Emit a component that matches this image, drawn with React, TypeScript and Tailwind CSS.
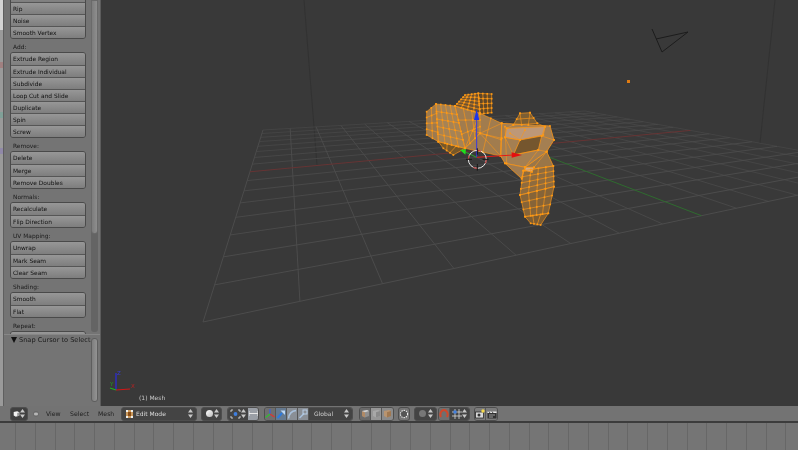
import React from "react";

type Pt = [number, number];

const font = { fontFamily: '"DejaVu Sans", sans-serif' };

// --- perspective floor grid ---
const quad: Pt[] = [[203, 322], [911, 171], [585, 111], [263, 130]];

function homography(u: number, v: number): Pt {
  const [p0, p1, p2, p3] = quad;
  const dx1 = p1[0] - p2[0], dx2 = p3[0] - p2[0], sx = p0[0] - p1[0] + p2[0] - p3[0];
  const dy1 = p1[1] - p2[1], dy2 = p3[1] - p2[1], sy = p0[1] - p1[1] + p2[1] - p3[1];
  const den = dx1 * dy2 - dx2 * dy1;
  const g = (sx * dy2 - dx2 * sy) / den;
  const h = (dx1 * sy - sx * dy1) / den;
  const a = p1[0] - p0[0] + g * p1[0], b = p3[0] - p0[0] + h * p3[0];
  const d = p1[1] - p0[1] + g * p1[1], e = p3[1] - p0[1] + h * p3[1];
  const w = g * u + h * v + 1;
  return [(a * u + b * v + p0[0]) / w, (d * u + e * v + p0[1]) / w];
}

function FloorGrid() {
  const ticks = Array.from({ length: 17 }, (_, i) => i / 16);
  return (
    <g strokeWidth={1} stroke="#4c4c4c">
      {ticks.map((t) => {
        const a = homography(t, 0), b = homography(t, 1), c = homography(0, t), d = homography(1, t);
        return (
          <g key={t}>
            {t !== 0.5 && <line x1={a[0]} y1={a[1]} x2={b[0]} y2={b[1]} strokeOpacity={1 - 0.45 * t} />}
            {t !== 0.5 && <line x1={c[0]} y1={c[1]} x2={d[0]} y2={d[1]} strokeOpacity={1 - 0.45 * t} />}
          </g>
        );
      })}
      <line x1={homography(0, 0.5)[0]} y1={homography(0, 0.5)[1]} x2={homography(1, 0.5)[0]} y2={homography(1, 0.5)[1]} stroke="#663434" />
      <line x1={homography(0.5, 0)[0]} y1={homography(0.5, 0)[1]} x2={homography(0.5, 1)[0]} y2={homography(0.5, 1)[1]} stroke="#2f6b2f" />
    </g>
  );
}

// --- mesh, coordinates are in a 3x space around (410,80) ---
type Patch = { c: Pt[]; nu: number; nv: number; fill: string };

const patches: Patch[] = [
  { c: [[50, 95], [78, 72], [85, 185], [50, 165]], nu: 2, nv: 4, fill: "#9c7a50" },
  { c: [[78, 72], [135, 78], [165, 205], [85, 185]], nu: 4, nv: 5, fill: "#a68355" },
  { c: [[135, 78], [210, 100], [210, 160], [165, 205]], nu: 3, nv: 3, fill: "#a17c4e" },
  { c: [[85, 185], [165, 205], [130, 225], [100, 205]], nu: 3, nv: 1, fill: "#765729" },
  { c: [[135, 78], [165, 45], [205, 40], [210, 100]], nu: 5, nv: 4, fill: "#6f5230" },
  { c: [[205, 40], [245, 42], [245, 98], [210, 102]], nu: 3, nv: 4, fill: "#5f4728" },
  { c: [[210, 100], [275, 130], [272, 228], [165, 205]], nu: 2, nv: 2, fill: "#a17c4e" },
  { c: [[310, 135], [330, 100], [360, 98], [382, 130]], nu: 2, nv: 1, fill: "#7d5f34" },
  { c: [[340, 272], [430, 258], [432, 320], [330, 345]], nu: 4, nv: 4, fill: "#8e6b3e" },
  { c: [[330, 345], [432, 320], [415, 400], [345, 410]], nu: 4, nv: 3, fill: "#866438" },
  { c: [[345, 410], [415, 400], [392, 435], [362, 430]], nu: 3, nv: 1, fill: "#7c5c32" },
];

const faces: { p: Pt[]; fill: string }[] = [
  { p: [[345, 262], [410, 215], [430, 258], [340, 272]], fill: "#9a7648" },
  { p: [[275, 130], [420, 138], [432, 180], [410, 215], [345, 262], [285, 250], [272, 228]], fill: "#a47f52" },
  { p: [[290, 145], [405, 140], [400, 165], [330, 180], [285, 172]], fill: "#bd9878" },
  { p: [[330, 180], [395, 168], [385, 210], [310, 225]], fill: "#75562e" },
  { p: [[285, 250], [345, 262], [335, 296]], fill: "#a07b50" },
  { p: [[345, 262], [372, 262], [366, 276], [345, 272]], fill: "#d0ab8c" },
];

const wires: Pt[][] = [
  [[210, 160], [275, 130]],
  [[165, 205], [210, 160], [272, 228]],
  [[210, 160], [275, 175], [272, 228]],
  [[275, 130], [275, 175]],
  [[285, 140], [290, 250]],
  [[285, 172], [310, 225], [272, 228]],
  [[330, 180], [285, 172]],
  [[405, 140], [395, 168], [432, 180]],
  [[385, 210], [410, 215]],
  [[310, 225], [385, 210], [345, 262]],
  [[310, 135], [290, 145]],
  [[382, 130], [405, 140]],
  [[330, 100], [335, 135]],
  [[360, 98], [355, 135]],
  [[335, 296], [340, 272]],
  [[300, 160], [330, 180], [345, 150]],
  [[372, 262], [410, 215]],
];

function lerp(a: Pt, b: Pt, t: number): Pt {
  return [a[0] + (b[0] - a[0]) * t, a[1] + (b[1] - a[1]) * t];
}

function Mesh() {
  const wire = "#f8961a";
  const lines: string[] = [];
  const verts: Pt[] = [];
  patches.forEach(({ c, nu, nv }) => {
    for (let i = 0; i <= nu; i++) {
      const p = lerp(c[0], c[1], i / nu), q = lerp(c[3], c[2], i / nu);
      lines.push(`M${p[0]} ${p[1]}L${q[0]} ${q[1]}`);
      for (let j = 0; j <= nv; j++) verts.push(lerp(p, q, j / nv));
    }
    for (let j = 0; j <= nv; j++) {
      const p = lerp(c[0], c[3], j / nv), q = lerp(c[1], c[2], j / nv);
      lines.push(`M${p[0]} ${p[1]}L${q[0]} ${q[1]}`);
    }
  });
  faces.forEach((f) => f.p.forEach((v) => verts.push(v)));
  wires.forEach((w) => w.forEach((v) => verts.push(v)));
  return (
    <g transform="translate(410 80) scale(0.3333)">
      {patches.map((p, i) => (
        <polygon key={i} points={p.c.map((v) => v.join(",")).join(" ")} fill={p.fill} />
      ))}
      {faces.map((f, i) => (
        <polygon key={i} points={f.p.map((v) => v.join(",")).join(" ")} fill={f.fill} stroke={wire} strokeWidth={2.4} strokeLinejoin="round" />
      ))}
      <path d={lines.join("")} fill="none" stroke={wire} strokeWidth={2} />
      {wires.map((w, i) => (
        <polyline key={i} points={w.map((v) => v.join(",")).join(" ")} fill="none" stroke={wire} strokeWidth={1.8} />
      ))}
      {verts.map((v, i) => (
        <rect key={i} x={v[0] - 2.5} y={v[1] - 2.5} width={5} height={5} fill="#ff9a14" />
      ))}

      {/* manipulator */}
      <line x1={200} y1={232} x2={200} y2={110} stroke="#3a3ae0" strokeWidth={3} />
      <polygon points="200,88 192,120 208,120" fill="#1f35e8" />
      <line x1={200} y1={232} x2={310} y2={225} stroke="#e01818" strokeWidth={3} />
      <polygon points="336,225 305,217 305,233" fill="#e40f0f" />
      <line x1={200} y1={232} x2={165} y2={216} stroke="#28a028" strokeWidth={3} />
      <polygon points="150,210 168,208 166,224" fill="#1ee01e" />

      {/* 3d cursor */}
      <circle cx={202} cy={238} r={27} fill="none" stroke="#e8e8e8" strokeWidth={3} />
      <circle cx={202} cy={238} r={27} fill="none" stroke="#c02020" strokeWidth={3} strokeDasharray="12 30" />
      <path d="M202 205V224M202 252V272M168 238H186M218 238H236" stroke="#161616" strokeWidth={3} />
    </g>
  );
}

function Viewport() {
  return (
    <div className="relative flex-1 h-full bg-[#393939] overflow-hidden">
      <svg className="absolute inset-0" width={697} height={406} viewBox="101 0 697 406">
        <path d="M304 0L317 165M775 0L760 143" stroke="#323232" fill="none" />
        <FloorGrid />
        <path d="M652 29L662 52L688 32L656 39" fill="none" stroke="#1c1c1c" strokeWidth={1} />
        <rect x={627} y={80} width={3} height={3} fill="#e07c12" />
        <Mesh />
        <path d="M116 390V373" stroke="#2a2ae0" strokeWidth={1.2} />
        <path d="M116 390L130 389" stroke="#d01818" strokeWidth={1.2} />
        <path d="M116 390L110 388" stroke="#20b020" strokeWidth={1.2} />
        <text x={117} y={375} fontSize={5.5} fill="#3a3ad0" style={font}>Z</text>
        <text x={131} y={388} fontSize={5.5} fill="#c02020" style={font}>X</text>
        <text x={110} y={386} fontSize={5.5} fill="#20a020" style={font}>Y</text>
      </svg>
      <div className="absolute left-[38px] bottom-[3px] text-[6px] leading-[10px] text-[#c8c8c8]">(1) Mesh</div>
    </div>
  );
}

// --- tool shelf ---
const groups: { label?: string; items: string[] }[] = [
  { items: ["", "Rip", "Noise", "Smooth Vertex"] },
  { label: "Add:", items: ["Extrude Region", "Extrude Individual", "Subdivide", "Loop Cut and Slide", "Duplicate", "Spin", "Screw"] },
  { label: "Remove:", items: ["Delete", "Merge", "Remove Doubles"] },
  { label: "Normals:", items: ["Recalculate", "Flip Direction"] },
  { label: "UV Mapping:", items: ["Unwrap", "Mark Seam", "Clear Seam"] },
  { label: "Shading:", items: ["Smooth", "Flat"] },
  { label: "Repeat:", items: [""] },
];

function ToolGroup({ label, items }: { label?: string; items: string[] }) {
  return (
    <div className="flex flex-col shrink-0">
      {label && <div className="h-[13px] pl-[3px] pt-[4px] text-[5.9px] leading-[8px] text-[#1c1c1c]">{label}</div>}
      <div className="flex flex-col shrink-0 rounded-[3px] border border-[#4a4a4a] overflow-hidden">
        {items.map((name, i) => (
          <div
            key={i}
            className={`h-[12px] shrink-0 pl-[2px] text-[5.9px] leading-[12px] text-[#111] bg-gradient-to-b from-[#979797] to-[#7e7e7e] ${i > 0 ? "border-t border-[#565656]" : ""}`}
          >
            {name}
          </div>
        ))}
      </div>
    </div>
  );
}

function Sidebar() {
  return (
    <div className="w-[97px] h-full flex flex-col bg-[#747474] border-r border-[#5c5c5c]">
      <div className="h-[335px] flex shrink-0 overflow-hidden border-b border-[#878787]">
        <div className="w-[76px] ml-[6px] -mt-[11px] flex flex-col shrink-0">
          {groups.map((g, i) => (
            <ToolGroup key={i} label={g.label} items={g.items} />
          ))}
        </div>
        <div className="ml-[5px] w-[7px] h-[332px] rounded-b-[3px] bg-[#646464] overflow-hidden">
          <div className="h-[234px] rounded-b-[3px] border border-[#6a6a6a] bg-gradient-to-r from-[#7c7c7c] to-[#8e8e8e]" />
        </div>
      </div>
      <div className="flex flex-1 min-h-0">
        <div className="w-[87px] flex shrink-0 items-start pl-[7px] gap-[2px]">
          <span className="mt-[2px] w-0 h-0 shrink-0 border-x-[3px] border-x-transparent border-t-[6px] border-t-[#111]" />
          <span className="text-[6.6px] leading-[10px] whitespace-nowrap text-[#1c1c1c]">Snap Cursor to Select</span>
        </div>
        <div className="w-[7px] h-[64px] mt-[3px] rounded-[3px] border border-[#5e5e5e] bg-gradient-to-r from-[#7e7e7e] to-[#939393]" />
      </div>
    </div>
  );
}

// --- header bits ---
function Arrows() {
  const c = "#c8c8c8";
  return (
    <svg width={5} height={9} viewBox="0 0 5 9" className="shrink-0">
      <path d="M2.5 0L5 3.4H0Z" fill={c} />
      <path d="M2.5 9L5 5.6H0Z" fill={c} />
    </svg>
  );
}

function Cube() {
  return (
    <svg width={10} height={10} viewBox="0 0 10 10">
      <path d="M1 2L6 1L9 2.5V7L4 9L1 7Z" fill="#f2f2f2" />
      <path d="M6 3.5L9 2.5V7L6 8.4Z" fill="#9a9a9a" />
    </svg>
  );
}

function IconBtn({ bg, children }: { bg: string; children: React.ReactNode }) {
  return <div className={`w-[11px] h-[13px] flex items-center justify-center border-r border-[#565656] last:border-r-0 ${bg}`}>{children}</div>;
}

function Group({ children, className = "" }: { children: React.ReactNode; className?: string }) {
  return <div className={`flex h-[14px] shrink-0 items-center rounded-[3px] border border-[#4e4e4e] overflow-hidden ${className}`}>{children}</div>;
}

function Header() {
  return (
    <div className="h-[17px] flex items-center bg-[#737373] border-b-[2px] border-b-[#3c3c3c] pl-[10px] shrink-0">
      <Group className="w-[18px] bg-[#404040] justify-between px-[2px]"><Cube /><Arrows /></Group>
      <svg width={6} height={6} viewBox="0 0 6 6" className="ml-[5px] shrink-0">
        <circle cx={3} cy={3} r={2.6} fill="#8b8b8b" stroke="#5c5c5c" strokeWidth={0.6} />
        <path d="M1.2 3H4.8" stroke="#e0e0e0" />
      </svg>
      <span className="ml-[7px] w-[24px] shrink-0 text-[6.2px] leading-[10px] text-[#222]">View</span>
      <span className="w-[28px] shrink-0 text-[6.2px] leading-[10px] text-[#222]">Select</span>
      <span className="w-[23px] shrink-0 text-[6.2px] leading-[10px] text-[#222]">Mesh</span>

      <Group className="w-[76px] bg-[#444] pl-[3px] pr-[3px] justify-between">
        <div className="flex items-center gap-[2px]">
          <svg width={9} height={10} viewBox="0 0 9 10">
            <rect x={1} y={1} width={7} height={8} fill="#c99a5e" />
            <path d="M1 1H3V3H1ZM6 1H8V3H6ZM1 7H3V9H1ZM6 7H8V9H6Z" fill="#f0f0f0" />
            <rect x={3} y={3} width={3} height={4} fill="#8a4c14" />
          </svg>
          <span className="text-[6px] leading-[10px] text-[#dcdcdc]">Edit Mode</span>
        </div>
        <Arrows />
      </Group>

      <Group className="ml-[4px] w-[21px] bg-[#444] justify-between pl-[4px] pr-[2px]">
        <span className="w-[7px] h-[7px] rounded-full bg-gradient-to-br from-white to-[#bdbdbd]" />
        <Arrows />
      </Group>

      <Group className="ml-[5px] w-[32px]">
        <div className="flex-1 h-full flex items-center justify-between bg-[#444] pl-[2px] pr-[2px]">
          <svg width={11} height={10} viewBox="0 0 11 10">
            <path d="M1 1H3M8 1H10M1 9H3M8 9H10M1 1V3M10 1V3M1 7V9M10 7V9" stroke="#d8d8d8" strokeWidth={0.9} />
            <circle cx={5.5} cy={5} r={1.9} fill="#3f7fe0" />
          </svg>
          <Arrows />
        </div>
        <div className="w-[11px] h-full flex items-center justify-center bg-[#9a9fa6]">
          <svg width={9} height={7} viewBox="0 0 9 7">
            <path d="M0 3.5H9M0 1V6M9 1V6" stroke="#e8e8e8" strokeWidth={1} />
          </svg>
        </div>
      </Group>

      <Group className="ml-[5px]">
        <IconBtn bg="bg-[#6f6f6f]">
          <svg width={10} height={11} viewBox="0 0 10 11">
            <path d="M5 6V1" stroke="#3a5fe0" strokeWidth={1.2} />
            <path d="M5 6L9.5 9" stroke="#e03030" strokeWidth={1.2} />
            <path d="M5 6L0.5 9.5" stroke="#30c030" strokeWidth={1.2} />
          </svg>
        </IconBtn>
        <IconBtn bg="bg-[#667a90]">
          <svg width={10} height={10} viewBox="0 0 10 10">
            <path d="M1.5 9L6 4" stroke="#2c7ae0" strokeWidth={2} />
            <path d="M4.5 1.5H9V6Z" fill="#bcd8f8" />
          </svg>
        </IconBtn>
        <IconBtn bg="bg-[#8a8f96]">
          <svg width={10} height={10} viewBox="0 0 10 10">
            <path d="M1.5 9.5C2 5 4.5 2 9 1.5" stroke="#a9c1dc" strokeWidth={1.6} fill="none" />
          </svg>
        </IconBtn>
        <IconBtn bg="bg-[#8a8f96]">
          <svg width={10} height={10} viewBox="0 0 10 10">
            <path d="M1.5 9L6 4.5" stroke="#a9c1dc" strokeWidth={1.6} />
            <rect x={5} y={1} width={4} height={4} fill="none" stroke="#b8cee6" strokeWidth={1} />
          </svg>
        </IconBtn>
        <div className="w-[43px] h-full flex items-center justify-between bg-[#444] pl-[5px] pr-[3px]">
          <span className="text-[6px] leading-[10px] text-[#cfcfcf]">Global</span>
          <Arrows />
        </div>
      </Group>

      <Group className="ml-[6px]">
        <IconBtn bg="bg-[#6a6a6a]">
          <svg width={9} height={9} viewBox="0 0 9 9">
            <path d="M1 2L6 1L8 2V7L4 8.5L1 7Z" fill="#8f8f8f" />
            <path d="M1 2L4 3.2V8.5L1 7Z" fill="#b08a66" />
            <path d="M4 3.2L8 2L6 1L1 2Z" fill="#d0d0d0" />
          </svg>
        </IconBtn>
        <IconBtn bg="bg-[#969696]">
          <svg width={9} height={9} viewBox="0 0 9 9">
            <path d="M1 2L6 1L8 2V7L4 8.5L1 7Z" fill="#a8a8a8" />
            <path d="M4 3.2L8 2V7L4 8.5Z" fill="#8a8a8a" />
          </svg>
        </IconBtn>
        <IconBtn bg="bg-[#8b8b8b]">
          <svg width={9} height={9} viewBox="0 0 9 9">
            <path d="M1 2L6 1L8 2V7L4 8.5L1 7Z" fill="#b89470" />
            <path d="M4 3.2L8 2V7L4 8.5Z" fill="#a07850" />
          </svg>
        </IconBtn>
      </Group>

      <Group className="ml-[4px] w-[12px] bg-[#767676] justify-center">
        <svg width={10} height={10} viewBox="0 0 10 10">
          <circle cx={5} cy={5} r={3.6} fill="#555" stroke="#ececec" strokeWidth={1.1} strokeDasharray="1.4 0.9" />
        </svg>
      </Group>

      <Group className="ml-[4px] w-[23px] bg-[#444] justify-between pl-[4px] pr-[3px]">
        <span className="w-[7px] h-[7px] rounded-full bg-[#777]" />
        <Arrows />
      </Group>

      <Group className="ml-[1px]">
        <IconBtn bg="bg-[#6f6f6f]">
          <svg width={10} height={9} viewBox="0 0 10 9">
            <path d="M2 8C0 4 3 1 5 1C7 1 10 4 8 8" fill="none" stroke="#d0482a" strokeWidth={2} />
          </svg>
        </IconBtn>
        <div className="w-[19px] h-full flex items-center justify-between bg-[#444] pl-[2px] pr-[2px]">
          <svg width={10} height={10} viewBox="0 0 10 10">
            <path d="M0 7H10M3 0V10M7 0V10M0 3H10" stroke="#d8d8d8" strokeWidth={0.8} />
            <rect x={1.5} y={1.5} width={3} height={3} fill="#3f7fe0" />
          </svg>
          <Arrows />
        </div>
      </Group>

      <Group className="ml-[4px]">
        <IconBtn bg="bg-[#7c7c7c]">
          <svg width={10} height={10} viewBox="0 0 10 10">
            <rect x={0.5} y={3} width={8} height={6} fill="#d8d8d8" stroke="#2a2a2a" strokeWidth={0.8} />
            <circle cx={4} cy={6} r={1.5} fill="#333" />
            <circle cx={8} cy={2} r={1.7} fill="#f4d84a" />
          </svg>
        </IconBtn>
        <IconBtn bg="bg-[#7c7c7c]">
          <svg width={10} height={10} viewBox="0 0 10 10">
            <rect x={0.5} y={4} width={9} height={5.5} fill="#333" />
            <path d="M0.5 2.5H9.5V4H0.5Z" fill="#e8e8e8" />
            <path d="M2 2.5L3 4M5 2.5L6 4" stroke="#222" strokeWidth={0.8} />
            <path d="M2 6H8M2 8H6" stroke="#c8c8c8" strokeWidth={0.7} />
          </svg>
        </IconBtn>
      </Group>
    </div>
  );
}

function Timeline() {
  return (
    <div className="flex-1 flex pl-[15px] bg-[#757575] overflow-hidden">
      {Array.from({ length: 40 }, (_, i) => (
        <div key={i} className="w-[19.75px] h-full shrink-0 border-l border-[#676767]" />
      ))}
    </div>
  );
}

export default function App() {
  return (
    <div className="w-[798px] h-[450px] flex flex-col overflow-hidden bg-[#727272] blur-[0.5px]" style={font}>
      <div className="h-[406px] flex shrink-0">
        <div className="w-[4px] h-full flex flex-col bg-[#9a9a9a] border-r border-[#5f5f5f]">
          <div className="h-[30px] bg-[#d4d4d4]" />
          <div className="h-[32px]" />
          <div className="h-[6px] bg-[#a08080]" />
          <div className="h-[44px]" />
          <div className="h-[6px] bg-[#80a098]" />
          <div className="h-[30px]" />
          <div className="h-[6px] bg-[#9088a8]" />
        </div>
        <Sidebar />
        <Viewport />
      </div>
      <Header />
      <Timeline />
    </div>
  );
}
